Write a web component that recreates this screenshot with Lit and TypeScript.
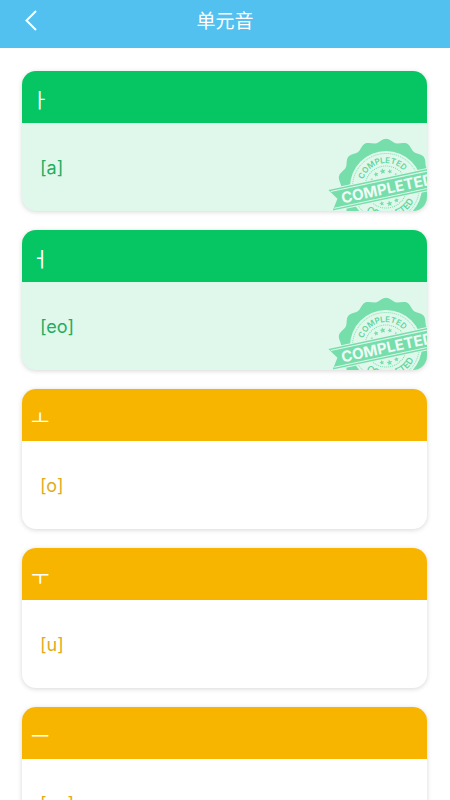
import { LitElement, html, css, svg } from "lit";
import { customElement, property } from "lit/decorators.js";
import { classMap } from "lit/directives/class-map.js";

interface Lesson {
  jamo: string;
  sound: string;
  completed: boolean;
}

const LESSONS: Lesson[] = [
  { jamo: "ㅏ", sound: "[a]", completed: true },
  { jamo: "ㅓ", sound: "[eo]", completed: true },
  { jamo: "ㅗ", sound: "[o]", completed: false },
  { jamo: "ㅜ", sound: "[u]", completed: false },
  { jamo: "ㅡ", sound: "[eu]", completed: false },
];

/** Outline of the seal: a circle with a soft wave round its rim. */
function sealPath(tips: number, radius: number, wave: number): string {
  const points: string[] = [];
  for (let deg = 0; deg < 360; deg += 3) {
    const a = (deg * Math.PI) / 180;
    const r = radius + wave * Math.cos(tips * a);
    points.push(`${(Math.sin(a) * r).toFixed(2)} ${(-Math.cos(a) * r).toFixed(2)}`);
  }
  return `M${points.join("L")}Z`;
}

function starPath(cx: number, cy: number, r: number): string {
  const points: string[] = [];
  for (let i = 0; i < 10; i++) {
    const a = (i * Math.PI) / 5;
    const q = i % 2 ? r * 0.45 : r;
    points.push(`${(cx + Math.sin(a) * q).toFixed(2)} ${(cy - Math.cos(a) * q).toFixed(2)}`);
  }
  return `M${points.join("L")}Z`;
}

const STARS = [-50, -26, 0, 26, 50].flatMap((deg) => {
  const a = (deg * Math.PI) / 180;
  const r = deg === 0 ? 3.2 : Math.abs(deg) === 26 ? 2.6 : 1.6;
  return [
    starPath(Math.sin(a) * 16, -Math.cos(a) * 16, r),
    starPath(Math.sin(a) * 17, Math.cos(a) * 17, r),
  ];
});

@customElement("completed-stamp")
export class CompletedStamp extends LitElement {
  static styles = css`
    :host {
      display: block;
      width: 100px;
      height: 75px;
    }
    .stamp {
      display: block;
      width: 100%;
      height: 100%;
    }
    .ink {
      fill: #76deab;
    }
    .paper {
      fill: #e0f8eb;
    }
    .ring {
      fill: none;
      stroke: #76deab;
      stroke-width: 1;
      stroke-dasharray: 1 1;
    }
    .line {
      stroke: #e0f8eb;
      stroke-width: 1;
    }
    .arc {
      fill: none;
    }
    .small {
      font: 600 8px Inter, sans-serif;
      fill: #5fd59b;
      text-anchor: middle;
    }
    .lower {
      font-size: 9px;
    }
    .large {
      font: 700 15px Inter, sans-serif;
      fill: #f0fcf6;
    }
  `;

  render() {
    return html`
      <svg class="stamp" viewBox="0 0 100 75" role="img" aria-label="Completed">
        <g transform="translate(59 51)">
          <path class="ink" d=${sealPath(14, 46.5, 1.8)} />
          <circle class="paper" r="36" />
          <circle class="ring" r="33.500" />
          <path id="upper" class="arc" d="M-24 0A24 24 0 0 1 24 0" />
          <path id="lower" class="arc" d="M-31 0A31 31 0 0 0 31 0" />
          <g transform="rotate(-12)">
            <text class="small"><textPath href="#upper" startOffset="50%">COMPLETED</textPath></text>
            <text class="small lower"><textPath href="#lower" startOffset="50%">COMPLETED</textPath></text>
            <circle class="ring" r="21" />
            ${STARS.map((d) => svg`<path class="ink" d=${d} />`)}
            <path class="paper" d="M-59 -10H60V13H-59Z" />
            <path class="ink" d="M-57 -9H60V12H-57L-50 1.500Z" />
            <path class="line" d="M-55 -7H60M-55 10H60" />
            <text class="large" x="-46" y="7">COMPLETED</text>
          </g>
        </g>
      </svg>
    `;
  }
}

@customElement("lesson-card")
export class LessonCard extends LitElement {
  @property({ attribute: false }) lesson!: Lesson;

  static styles = css`
    :host {
      display: block;
    }
    .card {
      position: relative;
      overflow: hidden;
      border-radius: 14px;
      background: #fff;
      color: #e0ac1c;
      box-shadow: 0 1px 5px rgba(0, 0, 0, 0.16);
    }
    .jamo {
      margin: 0;
      padding: 15px 9px 9px;
      background: #f7b500;
      color: #fff;
      font: 400 20px/28px "Noto Sans CJK KR", sans-serif;
    }
    .sound {
      margin: 0;
      padding: 31px 18px 29px;
      font: 400 18px/28px Inter, sans-serif;
    }
    .done {
      background: #e0f8eb;
      color: #21ad62;
    }
    .done .jamo {
      background: #06c664;
    }
    .stamp {
      position: absolute;
      right: 0;
      bottom: 0;
    }
  `;

  render() {
    const { jamo, sound, completed } = this.lesson;
    return html`
      <article class=${classMap({ card: true, done: completed })}>
        <h2 class="jamo">${jamo}</h2>
        <p class="sound">${sound}</p>
        ${completed ? html`<completed-stamp class="stamp"></completed-stamp>` : null}
      </article>
    `;
  }
}

@customElement("app-root")
export class AppRoot extends LitElement {
  static styles = css`
    :host {
      display: flex;
      flex-direction: column;
      height: 100vh;
      background: #fff;
    }
    .bar {
      display: grid;
      grid-template-columns: 64px 1fr 64px;
      align-items: center;
      flex: none;
      height: 48px;
      padding-bottom: 8px;
      box-sizing: border-box;
      background: #52c1f0;
      color: #fff;
    }
    .back {
      display: flex;
      align-items: center;
      height: 40px;
      padding: 0 0 0 22px;
      border: 0;
      background: none;
      color: inherit;
    }
    .chevron {
      width: 18px;
      height: 24px;
      fill: none;
      stroke: currentColor;
      stroke-width: 2;
    }
    .title {
      margin: 0;
      text-align: center;
      font: 400 19px/28px "Noto Sans CJK SC", sans-serif;
    }
    .list {
      flex: 1;
      min-height: 0;
      overflow-y: auto;
      scrollbar-width: none;
      display: flex;
      flex-direction: column;
      gap: 19px;
      padding: 23px 23px 23px 22px;
    }
    .item {
      flex: none;
    }
  `;

  render() {
    return html`
      <header class="bar">
        <button class="back" type="button" aria-label="返回">
          <svg class="chevron" viewBox="0 0 18 24" aria-hidden="true">
            <path d="M14 3L4.500 12.500L14 22" />
          </svg>
        </button>
        <h1 class="title">单元音</h1>
      </header>
      <main class="list">
        ${LESSONS.map(
          (lesson) => html`<lesson-card class="item" .lesson=${lesson}></lesson-card>`
        )}
      </main>
    `;
  }
}
